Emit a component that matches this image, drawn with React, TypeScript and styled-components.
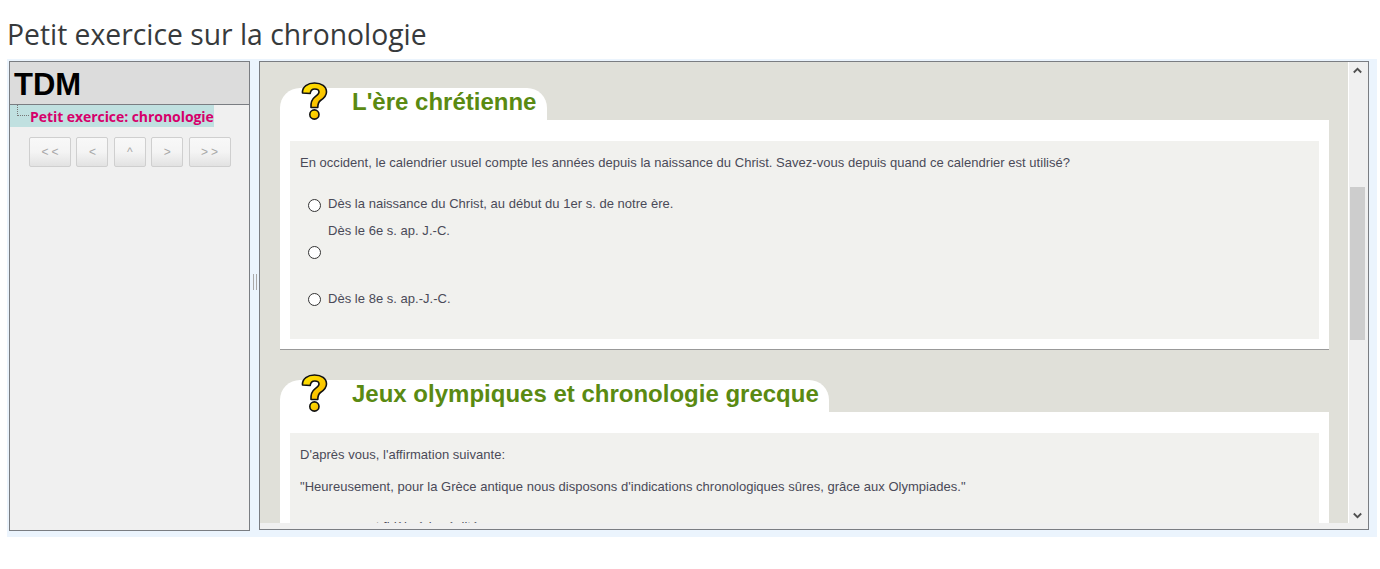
import React from 'react';
import styled, { createGlobalStyle } from 'styled-components';

const GlobalStyle = createGlobalStyle`
  html, body {
    margin: 0;
    padding: 0;
    background: #fff;
  }
`;

const Page = styled.div`
  width: 1380px;
  height: 569px;
  overflow: hidden;
  box-sizing: border-box;
  padding: 14px 3px 0 7px;
`;

const PageTitle = styled.h1`
  margin: 0;
  height: 45px;
  font: 400 28.3px/40px 'Open Sans', sans-serif;
  color: #373a3c;
`;

const Splitter = styled.div`
  display: flex;
  align-items: flex-start;
  height: 478px;
  padding: 2px 8px 0 2px;
  box-sizing: border-box;
  background: #ebf4fd;
`;

const LeftPane = styled.aside`
  width: 241px;
  height: 470px;
  box-sizing: border-box;
  flex: none;
  border: 1px solid #7a7d82;
  background: #f0f0f0;
`;

const TocHeader = styled.div`
  height: 43px;
  box-sizing: border-box;
  border-bottom: 1px solid #7a7d82;
  background: #dcdcdc;
  padding-left: 4px;
  font: 700 31px/45px 'Liberation Sans', sans-serif;
  color: #000;
`;

const TreeRow = styled.div`
  position: relative;
  width: 204px;
  height: 22px;
  box-sizing: border-box;
  padding-left: 20px;
  background: #c0e0e0;
  font: 700 14px/24px 'Open Sans', sans-serif;
  letter-spacing: -0.06px;
  color: #d6006b;
  white-space: nowrap;
`;

const TreeConnector = styled.span`
  position: absolute;
  left: 7px;
  top: 0;
  width: 11px;
  height: 10px;
  border-left: 1px dotted #777;
  border-bottom: 1px dotted #777;
`;

const NavButtons = styled.div`
  display: flex;
  gap: 5.4px;
  padding: 10px 0 0 19px;
`;

const NavButton = styled.div<{ $wide?: boolean }>`
  width: ${p => (p.$wide ? 42 : 32)}px;
  height: 30px;
  box-sizing: border-box;
  border: 1px solid #cfcfcf;
  border-radius: 2px;
  background: linear-gradient(#f8f8f8 0%, #f4f4f4 50%, #e2e2e2 100%);
  font: 400 12px/28px 'Liberation Sans', sans-serif;
  letter-spacing: 3px;
  text-indent: 3px;
  text-align: center;
  color: #a8a8a8;
`;

const Gutter = styled.div`
  width: 9px;
  flex: none;
  height: 470px;
  box-sizing: border-box;
  padding-top: 213px;
  display: flex;
  align-items: flex-start;
  justify-content: center;
`;

const Handle = styled.span`
  width: 2px;
  height: 16px;
  border-left: 1px solid #a8a8a8;
  border-right: 1px solid #a8a8a8;
`;

const RightPane = styled.main`
  width: 1110px;
  height: 469px;
  flex: none;
  box-sizing: border-box;
  border: 1px solid #7a7d82;
  background: #f0f0f0;
  display: flex;
  align-items: flex-start;
`;

const Viewport = styled.div`
  width: 1088px;
  height: 461px;
  flex: none;
  overflow: hidden;
  background: #e0e0d9;
  padding: 26px 19px 0 20px;
  box-sizing: border-box;
`;

const Question = styled.section`
  margin-bottom: 30px;
`;

const Tab = styled.div<{ $width: number }>`
  position: relative;
  width: ${p => p.$width}px;
  height: 32px;
  box-sizing: border-box;
  background: #fff;
  border-radius: 20px 20px 0 0;
  padding-left: 72px;
  font: 700 24px/28px 'Liberation Sans', sans-serif;
  color: #5a8a12;
  white-space: nowrap;
`;

const MarkIcon = styled.svg`
  position: absolute;
  left: 20px;
  top: -7px;
  width: 30px;
  height: 41px;
`;

const Panel = styled.div<{ $height: number }>`
  height: ${p => p.$height}px;
  box-sizing: border-box;
  background: #fff;
  padding: 21px 10px 10px;
  border-bottom: 1px solid #999;
`;

const Body = styled.div`
  height: 100%;
  box-sizing: border-box;
  background: #f1f1ee;
  padding: 14px 10px 0;
  font: 400 13px/15px 'Liberation Sans', sans-serif;
  letter-spacing: 0.025px;
  color: #4a4a58;
`;

const Para = styled.p<{ $gap?: number; $indent?: number }>`
  margin: 0 0 ${p => p.$gap ?? 0}px;
  padding-left: ${p => p.$indent ?? 0}px;
`;

const Choices = styled.div`
  padding: 26px 0 0 8px;
`;

const Choice = styled.label<{ $height: number }>`
  display: flex;
  align-items: flex-start;
  height: ${p => p.$height}px;
  gap: 7px;
`;

const ChoiceStacked = styled.label`
  display: block;
  height: 68px;
`;

const StackedText = styled.div`
  padding: 0 0 5px 20px;
`;

const Radio = styled.span<{ $top?: number }>`
  display: block;
  flex: none;
  width: 13px;
  height: 13px;
  margin-top: ${p => p.$top ?? 3}px;
  box-sizing: border-box;
  border: 1px solid #333;
  border-radius: 50%;
  background: #fff;
`;

const ScrollBar = styled.div`
  width: 20px;
  height: 461px;
  flex: none;
  box-sizing: border-box;
  padding-left: 1px;
  background: #f0f0f0;
  display: flex;
  flex-direction: column;
  border-left: 1px solid #fff;
`;

const Arrow = styled.svg`
  display: block;
  width: 9px;
  height: 7px;
  margin-left: 3px;
`;

const ArrowSlot = styled.div<{ $height: number }>`
  height: ${p => p.$height}px;
  padding-top: 5px;
  box-sizing: border-box;
`;

const Thumb = styled.div`
  width: 15px;
  height: 153px;
  background: #cdcdcd;
`;

const Track = styled.div`
  flex: 1;
`;

function QuestionMark() {
  return (
    <MarkIcon viewBox="0 0 30 41">
      <defs>
        <linearGradient id="gold" x1="0" y1="0" x2="1" y2="1">
          <stop offset="0" stopColor="#ffe600" />
          <stop offset="1" stopColor="#f8b400" />
        </linearGradient>
      </defs>
      <path
        d="M2.5 12 C2 5.5 8 2 14.5 2 C21.5 2 26.5 5.5 26.5 11 C26.5 15.5 23.5 17.5 20.5 19.5 C18.5 21 17.8 22.5 17.8 26.5 L11 26.5 C10.6 21 12 18 15 15.8 C17.5 14 19 13 19 11 C19 9 17 8 14.8 8 C12 8 10.5 9.8 10.2 12.5 Z"
        fill="url(#gold)"
        stroke="#111"
        strokeWidth="1.6"
        strokeLinejoin="round"
      />
      <circle cx="14.4" cy="33.5" r="4.6" fill="url(#gold)" stroke="#111" strokeWidth="1.6" />
    </MarkIcon>
  );
}

export default function App() {
  return (
    <Page>
      <GlobalStyle />
      <PageTitle>Petit exercice sur la chronologie</PageTitle>
      <Splitter>
        <LeftPane>
          <TocHeader>TDM</TocHeader>
          <TreeRow>
            <TreeConnector />
            Petit exercice: chronologie
          </TreeRow>
          <NavButtons>
            <NavButton $wide>&lt;&lt;</NavButton>
            <NavButton>&lt;</NavButton>
            <NavButton>^</NavButton>
            <NavButton>&gt;</NavButton>
            <NavButton $wide>&gt;&gt;</NavButton>
          </NavButtons>
        </LeftPane>
        <Gutter>
          <Handle />
        </Gutter>
        <RightPane>
          <Viewport>
            <Question>
              <Tab $width={267}>
                <QuestionMark />
                L'ère chrétienne
              </Tab>
              <Panel $height={230}>
                <Body>
                  <Para>
                    En occident, le calendrier usuel compte les années depuis la naissance du Christ. Savez-vous
                    depuis quand ce calendrier est utilisé?
                  </Para>
                  <Choices>
                    <Choice $height={27}>
                      <Radio />
                      Dès la naissance du Christ, au début du 1er s. de notre ère.
                    </Choice>
                    <ChoiceStacked>
                      <StackedText>Dès le 6e s. ap. J.-C.</StackedText>
                      <Radio />
                    </ChoiceStacked>
                    <Choice $height={20}>
                      <Radio $top={2} />
                      Dès le 8e s. ap.-J.-C.
                    </Choice>
                  </Choices>
                </Body>
              </Panel>
            </Question>
            <Question>
              <Tab $width={549}>
                <QuestionMark />
                Jeux olympiques et chronologie grecque
              </Tab>
              <Panel $height={230}>
                <Body>
                  <Para $gap={17}>D'après vous, l'affirmation suivante:</Para>
                  <Para $gap={25}>
                    "Heureusement, pour la Grèce antique nous disposons d'indications chronologiques sûres, grâce aux
                    Olympiades."
                  </Para>
                  <Para $indent={62}>est fidèle à la réalité.</Para>
                </Body>
              </Panel>
            </Question>
          </Viewport>
          <ScrollBar>
            <ArrowSlot $height={125}>
              <Arrow viewBox="0 0 9 7">
                <path d="M0.8 5.5 L4.5 1.8 L8.2 5.5" fill="none" stroke="#505050" strokeWidth="1.8" />
              </Arrow>
            </ArrowSlot>
            <Thumb />
            <Track />
            <ArrowSlot $height={16}>
              <Arrow viewBox="0 0 9 7">
                <path d="M0.8 1.5 L4.5 5.2 L8.2 1.5" fill="none" stroke="#505050" strokeWidth="1.8" />
              </Arrow>
            </ArrowSlot>
          </ScrollBar>
        </RightPane>
      </Splitter>
    </Page>
  );
}
